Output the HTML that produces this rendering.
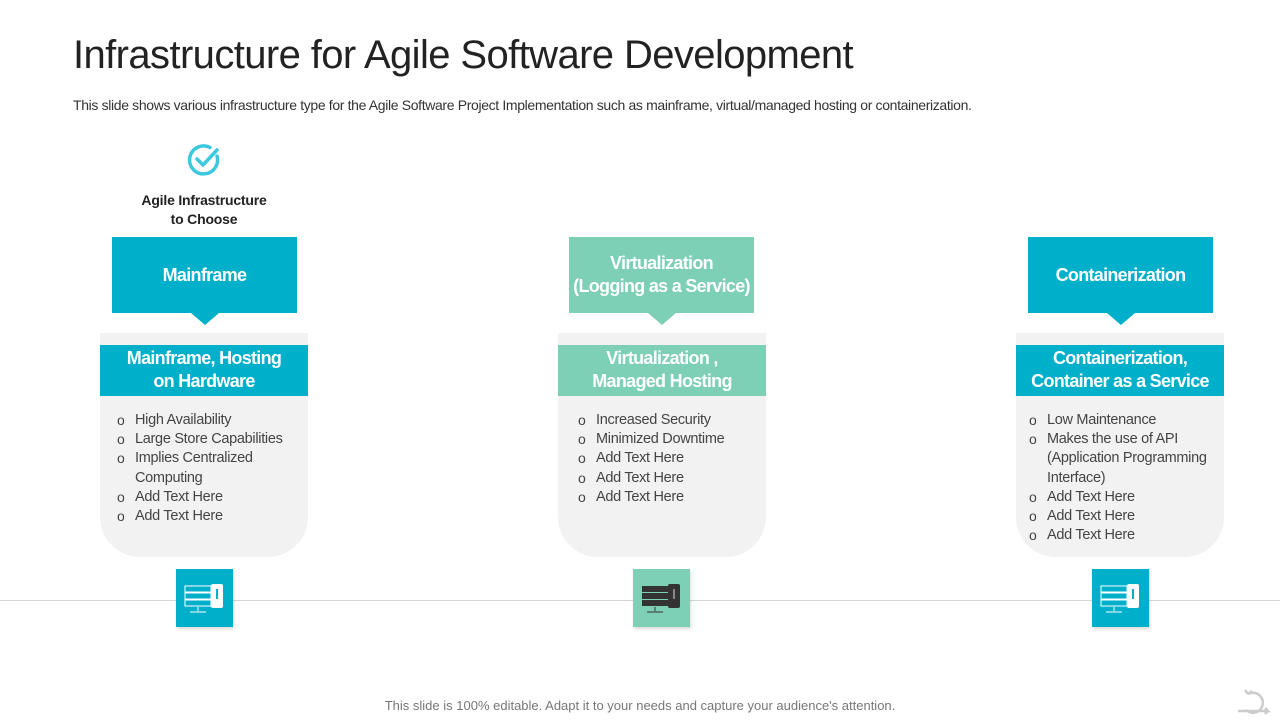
<!DOCTYPE html>
<html><head><style>
*{margin:0;padding:0;box-sizing:border-box}
body{width:1280px;height:720px;background:#fff;position:relative;overflow:hidden;font-family:"Liberation Sans",sans-serif;color:#222}
.a{position:absolute}
h1{position:absolute;left:73px;top:33px;font-size:40px;font-weight:normal;color:#222;letter-spacing:-0.6px;white-space:nowrap}
.sub{left:73px;top:97px;font-size:14px;color:#333;letter-spacing:-0.35px;white-space:nowrap}
.hd{width:185px;height:76px;color:#fff;font-weight:bold;font-size:18px;display:flex;align-items:center;justify-content:center;text-align:center;line-height:23px;top:237px;white-space:nowrap;letter-spacing:-0.7px}
.hd:after{content:"";position:absolute;left:50%;bottom:-12px;margin-left:-14px;border-left:14px solid transparent;border-right:14px solid transparent;border-top:12px solid var(--c)}
.card{top:333px;width:208px;height:224px;background:#f2f2f2;border-radius:0 0 40px 40px}
.band{position:absolute;left:0;top:12px;width:208px;height:51px;color:#fff;font-weight:bold;font-size:18px;text-align:center;line-height:23px;padding-top:2px;white-space:nowrap;letter-spacing:-0.7px}
ul{position:absolute;left:17px;top:78px;list-style:none;font-size:14.5px;color:#444;line-height:19.2px;width:185px;letter-spacing:-0.3px}
li{padding-left:18px;position:relative}
li:before{content:"o";position:absolute;left:0;top:0;font-size:14px}
.ic{top:569px;width:57px;height:58px;box-shadow:1px 2px 3px rgba(0,0,0,.15)}
</style></head><body>
<h1>Infrastructure for Agile Software Development</h1>
<div class="a sub">This slide shows various infrastructure type for the Agile Software Project Implementation such as mainframe, virtual/managed hosting or containerization.</div>
<svg class="a" style="left:186px;top:142px" width="36" height="36" viewBox="0 0 36 36"><path d="M31 14A14 14 0 1 1 24 5.5" fill="none" stroke="#3cc8de" stroke-width="3.5" stroke-linecap="round"/><path d="M11 17l6 6 14-15" fill="none" stroke="#3cc8de" stroke-width="3.5" stroke-linecap="round" stroke-linejoin="round"/></svg>
<div class="a" style="left:120px;top:191px;width:168px;text-align:center;font-weight:bold;font-size:14px;line-height:19px;letter-spacing:-0.2px">Agile Infrastructure<br>to Choose</div>
<div class="a" style="left:0;top:600px;width:1280px;height:1px;background:#d6d6d6"></div>

<div class="a hd" style="left:112px;background:#00afc9;--c:#00afc9">Mainframe</div>
<div class="a card" style="left:100px"><div class="band" style="background:#00afc9">Mainframe, Hosting<br>on Hardware</div>
<ul><li>High Availability</li><li>Large Store Capabilities</li><li>Implies Centralized Computing</li><li>Add Text Here</li><li>Add Text Here</li></ul></div>

<div class="a hd" style="left:569px;background:#7dcfb6;--c:#7dcfb6">Virtualization<br>(Logging as a Service)</div>
<div class="a card" style="left:558px"><div class="band" style="background:#7dcfb6">Virtualization ,<br>Managed Hosting</div>
<ul style="left:20px"><li>Increased Security</li><li>Minimized Downtime</li><li>Add Text Here</li><li>Add Text Here</li><li>Add Text Here</li></ul></div>

<div class="a hd" style="left:1028px;background:#00afc9;--c:#00afc9">Containerization</div>
<div class="a card" style="left:1016px"><div class="band" style="background:#00afc9">Containerization,<br>Container as a Service</div>
<ul style="left:13px;width:195px"><li>Low Maintenance</li><li>Makes the use of API (Application Programming Interface)</li><li>Add Text Here</li><li>Add Text Here</li><li>Add Text Here</li></ul></div>

<div class="a ic" style="left:176px;background:#00afc9"><svg width="57" height="58"><rect x="9" y="17" width="26" height="6" fill="none" stroke="#fff"/><rect x="9" y="24" width="26" height="6" fill="none" stroke="#fff"/><rect x="9" y="31" width="26" height="6" fill="none" stroke="#fff"/><rect x="35" y="15" width="12" height="24" rx="2" fill="#fff"/><rect x="40" y="20" width="2" height="10" fill="#00afc9"/><path d="M22 38v4M14 43h16" stroke="#fff"/></svg></div>
<div class="a ic" style="left:633px;background:#7dcfb6"><svg width="57" height="58"><rect x="9" y="17" width="26" height="6" fill="#333"/><rect x="9" y="24" width="26" height="6" fill="#333"/><rect x="9" y="31" width="26" height="6" fill="#333"/><rect x="35" y="15" width="12" height="24" rx="2" fill="#333"/><rect x="40" y="20" width="2" height="10" fill="#888"/><path d="M22 38v4M14 43h16" stroke="#333"/></svg></div>
<div class="a ic" style="left:1092px;background:#00afc9"><svg width="57" height="58"><rect x="9" y="17" width="26" height="6" fill="none" stroke="#fff"/><rect x="9" y="24" width="26" height="6" fill="none" stroke="#fff"/><rect x="9" y="31" width="26" height="6" fill="none" stroke="#fff"/><rect x="35" y="15" width="12" height="24" rx="2" fill="#fff"/><rect x="40" y="20" width="2" height="10" fill="#00afc9"/><path d="M22 38v4M14 43h16" stroke="#fff"/></svg></div>

<div class="a" style="left:0;width:1280px;top:698px;text-align:center;font-size:13px;color:#777">This slide is 100% editable. Adapt it to your needs and capture your audience's attention.</div>
<svg class="a" style="left:1234px;top:680px" width="42" height="36"><path d="M14 14a10 10 0 1 1 -2 16M4 31h30l-3-3M34 31l-3 3M14 14l-3-4M14 14l4-3" fill="none" stroke="#ccc" stroke-width="2.5"/></svg>
</body></html>
